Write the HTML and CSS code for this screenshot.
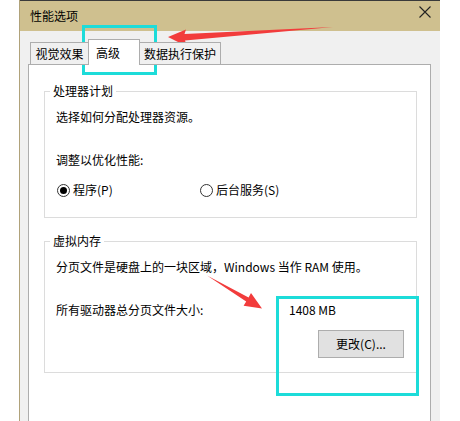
FILE: index.html
```html
<!DOCTYPE html>
<html lang="zh-CN">
<head>
<meta charset="utf-8">
<title>性能选项</title>
<link rel="stylesheet" href="styles.css">
</head>
<body>
<div class="window">
  <div class="titlebar">
    <span class="title">性能选项</span>
    <svg class="close" width="12" height="12" viewBox="0 0 12 12"><path d="M0.5 0.5 L11.5 11.5 M11.5 0.5 L0.5 11.5" stroke="#222" stroke-width="1.1" fill="none"/></svg>
  </div>
  <div class="client">
    <div class="tabs">
      <div class="tab t1">视觉效果</div>
      <div class="tab t2 active">高级</div>
      <div class="tab t3">数据执行保护</div>
    </div>
    <div class="panel">
      <fieldset class="group g1">
        <legend>处理器计划</legend>
        <div class="line l1">选择如何分配处理器资源。</div>
        <div class="line l2">调整以优化性能:</div>
        <div class="radios">
          <label class="radio r1"><span class="circle checked"></span>程序(P)</label>
          <label class="radio r2"><span class="circle"></span>后台服务(S)</label>
        </div>
      </fieldset>
      <fieldset class="group g2">
        <legend>虚拟内存</legend>
        <div class="line l1">分页文件是硬盘上的一块区域，Windows 当作 RAM 使用。</div>
        <div class="vmrow">
          <div class="line">所有驱动器总分页文件大小:</div>
          <div class="vmright">
            <div class="line">1408 MB</div>
            <div class="btn">更改(C)...</div>
          </div>
        </div>
      </fieldset>
    </div>
  </div>
</div>
<div class="hl hl1"></div>
<div class="hl hl2"></div>
<svg class="arrows" width="460" height="421" viewBox="0 0 460 421">
  <polygon points="168,37 186,29.5 184.5,34 333,27 185,40.5 187,46.5" fill="#f23c3c"/>
  <polygon points="262,308.5 251,293 248.6,297.4 207,275.5 246.2,301.6 243.6,305.8" fill="#f23c3c"/>
</svg>
</body>
</html>
```
FILE: styles.css
```css
html, body {
  margin: 0;
  padding: 0;
}
body {
  width: 460px;
  height: 421px;
  overflow: hidden;
  background: #ffffff;
  position: relative;
  font-family: "Noto Sans CJK SC", "Microsoft YaHei", sans-serif;
  font-size: 12px;
  color: #000;
}
.window {
  margin-left: 19px;
  width: 420px;
  height: 421px;
  border-left: 1px solid #b0a27a;
  display: flex;
  flex-direction: column;
}
.titlebar {
  height: 30px;
  border-top: 1px solid #3a3a3a;
  background: #cfc08f;
  display: flex;
  align-items: center;
  justify-content: space-between;
  padding: 0 9px 0 10px;
  flex: none;
}
.title {
  line-height: 16px;
  margin-top: -1px;
}
.close {
  display: block;
  margin-top: -8px;
}
.client {
  flex: 1;
  background: #f0f0f0;
  padding: 8px 9px 0 8px;
  display: flex;
  flex-direction: column;
}
.tabs {
  display: flex;
  align-items: flex-end;
  height: 26px;
  margin-left: 2px;
  margin-bottom: -1px;
  position: relative;
  z-index: 1;
}
.tab {
  box-sizing: border-box;
  height: 23px;
  border: 1px solid #adadad;
  background: #f0f0f0;
  display: flex;
  align-items: center;
  justify-content: center;
  line-height: 16px;
  padding-top: 0;
}
.t1 { width: 59px; }
.t2 {
  width: 52px;
  margin-left: -1px;
  height: 26px;
  background: #ffffff;
  border-bottom: none;
  justify-content: flex-start;
  padding-left: 7px;
  padding-top: 1px;
}
.t3 { width: 82px; margin-left: -1px; }
.panel {
  flex: 1;
  background: #ffffff;
  border: 1px solid #adadad;
  border-bottom: none;
  padding: 18px 13px 0 15px;
}
.group {
  margin: 0;
  border: 1px solid #dcdcdc;
  padding: 0 12px 17px 11px;
  min-width: 0;
}
.group legend {
  padding: 0 3px;
  margin-left: -6px;
  line-height: 16px;
}
.g2 {
  margin-top: 15px;
  padding-bottom: 14px;
}
.line {
  line-height: 20px;
  white-space: nowrap;
}
.l1 { margin-top: 8px; }
.l2 { margin-top: 23px; }
.radios {
  display: flex;
  margin-top: 10px;
  height: 20px;
}
.radio {
  display: flex;
  align-items: center;
  line-height: 20px;
}
.r1 { width: 144px; }
.circle {
  box-sizing: border-box;
  width: 13px;
  height: 13px;
  border-radius: 50%;
  border: 1px solid #333;
  background: #fff;
  margin-right: 3px;
  display: flex;
  align-items: center;
  justify-content: center;
}
.r1 .circle { margin-left: 1px; }
.circle.checked::after {
  content: "";
  width: 7px;
  height: 7px;
  border-radius: 50%;
  background: #000;
}
.vmrow {
  display: grid;
  grid-template-columns: 233px 1fr;
  margin-top: 23px;
}
.vmright {
  display: flex;
  flex-direction: column;
}
.btn {
  box-sizing: border-box;
  width: 86px;
  height: 28px;
  margin-top: 10px;
  margin-left: 29px;
  border: 1px solid #adadad;
  background: #e1e1e1;
  display: flex;
  align-items: center;
  justify-content: center;
  line-height: 16px;
}
.hl {
  position: absolute;
  box-sizing: border-box;
  border: 3px solid #1ddcd9;
}
.hl1 {
  left: 82px;
  top: 25px;
  width: 75px;
  height: 50px;
}
.hl2 {
  left: 276px;
  top: 296px;
  width: 143px;
  height: 100px;
}
.arrows {
  position: absolute;
  left: 0;
  top: 0;
}
```
